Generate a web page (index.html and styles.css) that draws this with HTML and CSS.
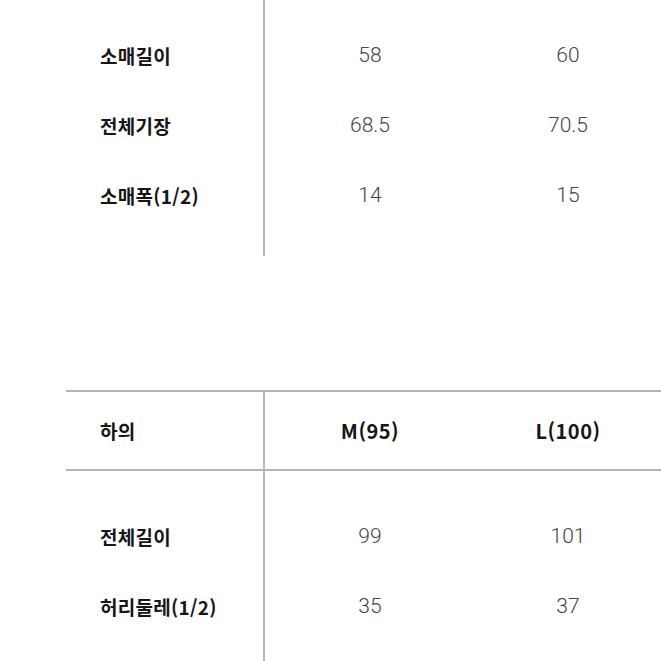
FILE: index.html
```html
<!DOCTYPE html>
<html lang="ko">
<head>
<meta charset="utf-8">
<link rel="stylesheet" href="styles.css">
</head>
<body>
<div class="page">
  <div class="table top">
    <div class="row pad-top"><div class="label"></div><div></div><div></div></div>
    <div class="row"><div class="label">소매길이</div><div class="val">58</div><div class="val">60</div></div>
    <div class="row"><div class="label">전체기장</div><div class="val">68.5</div><div class="val">70.5</div></div>
    <div class="row"><div class="label">소매폭(1/2)</div><div class="val">14</div><div class="val">15</div></div>
    <div class="row pad-bottom"><div class="label"></div><div></div><div></div></div>
  </div>
  <div class="table bottom">
    <div class="row head"><div class="label">하의</div><div class="hval">M(95)</div><div class="hval">L(100)</div></div>
    <div class="row pad-mid"><div class="label"></div><div></div><div></div></div>
    <div class="row"><div class="label">전체길이</div><div class="val">99</div><div class="val">101</div></div>
    <div class="row"><div class="label">허리둘레(1/2)</div><div class="val">35</div><div class="val">37</div></div>
    <div class="row pad-end"><div class="label"></div><div></div><div></div></div>
  </div>
</div>
</body>
</html>
```
FILE: styles.css
```css
html, body {
  margin: 0;
  padding: 0;
  background: #ffffff;
}
.page {
  width: 661px;
  height: 661px;
  overflow: hidden;
  font-family: "Noto Sans CJK KR", "Noto Sans", sans-serif;
  color: #111;
}
.table {
  margin-left: 66px;
}
.top {
  margin-bottom: 134px;
}
.row {
  display: grid;
  grid-template-columns: 199px 212px 1fr;
  height: 70px;
  align-items: stretch;
}
.row > div {
  display: flex;
  align-items: center;
}
.label {
  border-right: 2px solid #bcbcbc;
  padding-left: 34px;
  font-weight: 700;
  font-size: 19px;
  letter-spacing: 0.3px;
  color: #161616;
}
.val {
  justify-content: center;
  font-family: Roboto, "Liberation Sans", sans-serif;
  font-weight: 300;
  font-size: 21px;
  color: #444;
  margin-left: -2px;
}
.hval {
  justify-content: center;
  font-family: "Noto Sans CJK KR", "Noto Sans", sans-serif;
  font-weight: 700;
  font-size: 20px;
  letter-spacing: 0.5px;
  color: #161616;
  margin-left: -2px;
}
.pad-top { height: 20px; }
.pad-bottom { height: 26px; }
.bottom {
  border-top: 2px solid #b3b3b3;
}
.head {
  height: 77px;
  border-bottom: 2px solid #b3b3b3;
}
.head .label {
  font-weight: 600;
}
.pad-mid { height: 30px; }
.pad-end { height: 40px; }
```
